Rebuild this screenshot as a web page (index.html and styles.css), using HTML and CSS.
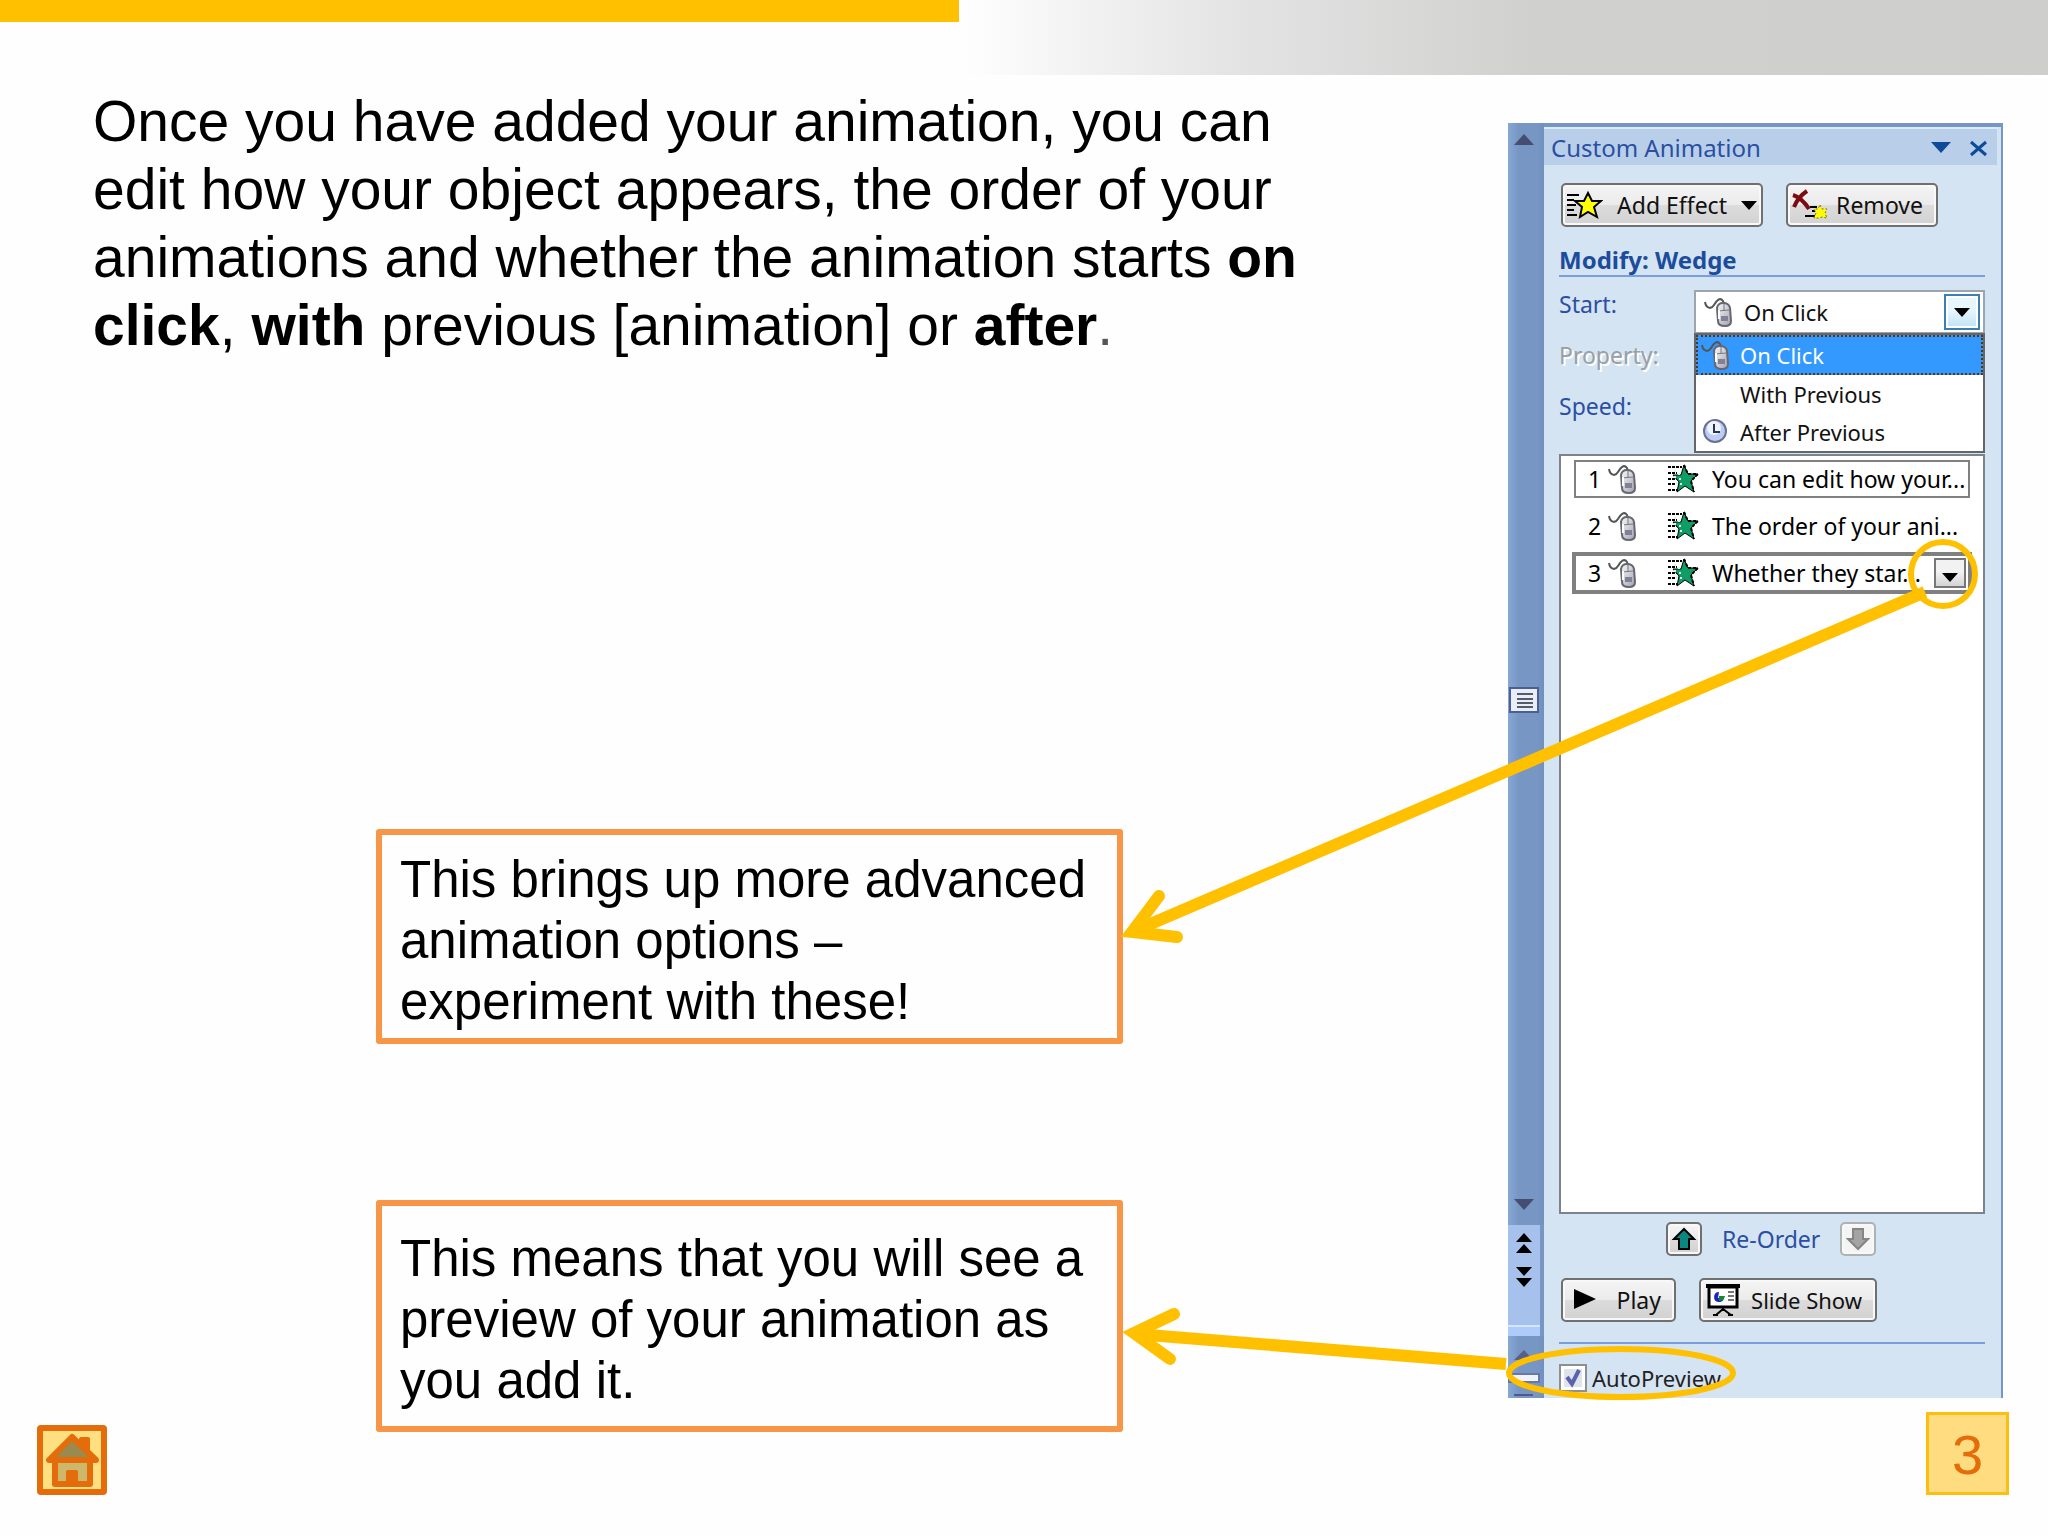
FILE: index.html
```
<!DOCTYPE html>
<html lang="en">
<head>
    <meta charset="UTF-8">
    <meta name="viewport" content="width=device-width, initial-scale=1.0">
    <title>Custom Animation</title>
    <link rel="stylesheet" href="styles.css">
</head>
<body>
    <!-- shared icons -->
    <svg class="defs" aria-hidden="true">
        <defs>
            <linearGradient id="mouseFill" x1="0" y1="0" x2="1" y2="1">
                <stop offset="0" stop-color="#fafafc"/>
                <stop offset="1" stop-color="#a0a1b0"/>
            </linearGradient>
            <symbol id="mouse" viewBox="0 0 30 32">
                <path d="M1 6c1 6 6 8 9 3s6-8 9-4l1 3" fill="none" stroke="#555" stroke-width="2"/>
                <path d="M13 12q1-5 6-5 6 0 7 5l1 13q0 5-6 5-7 0-7-5z" fill="url(#mouseFill)" stroke="#66676f" stroke-width="2"/>
                <path d="M14 15l11-1M20 8v6" stroke="#77787f" stroke-width="1" fill="none"/>
                <path d="M17 20h7v5h-7z" fill="#808196"/>
                <path d="M15 14v9" stroke="#fff" stroke-width="2"/>
            </symbol>
            <symbol id="effect" viewBox="0 0 32 30">
                <path d="M1 3h14M1 9h9M1 15h10M1 20h8M1 26h12" stroke="#000" stroke-width="2" stroke-dasharray="3 1"/>
                <path d="M17 1l4 9h10l-7 7 3 11-9-6-8 6 2-10-6-7h8z" fill="#0f9d66" stroke="#000" stroke-width="1"/>
                <path d="M7 6h2v2h-2zM11 9h2v2h-2zM7 12h2v2h-2zM12 14h2v2h-2zM9 18h2v2h-2zM13 19h2v2h-2z" fill="#d8f5e8"/>
                <path d="M17 1l4 9h10l-7 7 3 11" fill="none" stroke="#000" stroke-width="2" stroke-dasharray="3 2"/>
            </symbol>
        </defs>
    </svg>

    <header class="band">
        <div class="band-yellow"></div>
    </header>

    <main>
        <section class="left">
            <p class="intro">Once you have added your animation, you can edit how your object appears, the order of your animations and whether the animation starts <b>on</b> <b>click</b>, <b>with</b> previous [animation] or <b>after</b><span class="dot">.</span></p>
            <div class="note note-options">This brings up more advanced animation options – experiment with these!</div>
            <div class="note note-preview">This means that you will see a preview of your animation as you add it.</div>
        </section>

        <section class="shot">
            <div class="scroll">
                <svg class="scroll-up" width="20" height="11" viewBox="0 0 20 11"><path d="M0 11L10 0l10 11z" fill="#454d70"/></svg>
                <svg class="thumb" width="30" height="26" viewBox="0 0 30 26">
                    <rect x="1" y="1" width="28" height="24" fill="#e9edf6" stroke="#4a5f96" stroke-width="2"/>
                    <path d="M8 7h16M8 12h16M8 16h16M8 20h16" stroke="#555b6b" stroke-width="2"/>
                </svg>
                <svg class="scroll-down" width="20" height="11" viewBox="0 0 20 11"><path d="M0 0h20L10 11z" fill="#454d70"/></svg>
                <div class="pager">
                    <svg width="16" height="54" viewBox="0 0 16 54">
                        <path d="M8 0l8 9H0zM8 11l8 9H0zM0 34h16l-8 9zM0 45h16l-8 9z" fill="#000"/>
                    </svg>
                </div>
                <div class="lower">
                    <svg width="32" height="52" viewBox="0 0 32 52">
                        <path d="M6 16L16 6l9 10z" fill="#56608a"/>
                        <rect x="1" y="30" width="30" height="8" fill="#f2f3f8" stroke="#6678a8" stroke-width="2"/>
                        <path d="M6 51h19" stroke="#4d5b8c" stroke-width="2"/>
                    </svg>
                </div>
            </div>

            <div class="pane">
                <div class="titlebar">
                    <span>Custom Animation</span>
                    <svg width="58" height="18" viewBox="0 0 58 18">
                        <path d="M0 3h20L10 14z" fill="#0f4a98"/>
                        <path d="M40 3l15 13M55 3L40 16" stroke="#0f4a98" stroke-width="3"/>
                    </svg>
                </div>

                <div class="pane-body">
                    <div class="buttons">
                        <button type="button" class="btn add">
                            <svg width="36" height="30" viewBox="0 0 36 30">
                                <path d="M0 5h12M0 10h7M0 15h9M0 20h7M0 25h10" stroke="#000" stroke-width="2"/>
                                <path d="M21 3l4 8h9l-7 6 3 10-9-5-8 5 2-10-7-6h9z" fill="#ff0" stroke="#000" stroke-width="2"/>
                            </svg>
                            <span>Add Effect</span>
                            <svg width="16" height="9" viewBox="0 0 16 9"><path d="M0 0h16L8 9z"/></svg>
                        </button>
                        <button type="button" class="btn remove">
                            <svg width="36" height="32" viewBox="0 0 36 32">
                                <path d="M1 6q9 3 16 14M15 2Q6 8 2 18" fill="none" stroke="#7c0b12" stroke-width="4"/>
                                <path d="M18 18h7M20 22h5M13 27h12" stroke="#000" stroke-width="2"/>
                                <path d="M28 16l2 4h5l-2 4 2 5-5-1-3 1-5 0 2-5-2-4h4z" fill="#ff0" stroke="#777000" stroke-width="1" stroke-dasharray="2 2"/>
                            </svg>
                            <span>Remove</span>
                        </button>
                    </div>

                    <h2>Modify: Wedge</h2>

                    <div class="fields">
                        <div class="labels">
                            <label for="start">Start:</label>
                            <span class="off">Property:</span>
                            <span>Speed:</span>
                        </div>
                        <div class="combo">
                            <div class="combo-box">
                                <svg width="30" height="32"><use href="#mouse"/></svg>
                                <select id="start">
                                    <option>On Click</option>
                                    <option>With Previous</option>
                                    <option>After Previous</option>
                                </select>
                                <span class="combo-arrow"><svg width="16" height="9" viewBox="0 0 16 9"><path d="M0 0h16L8 9z"/></svg></span>
                            </div>
                            <ul class="menu" role="listbox" aria-label="Start">
                                <li class="picked" role="option" aria-selected="true"><svg width="30" height="32"><use href="#mouse"/></svg>On Click</li>
                                <li role="option"><svg width="30" height="32"></svg>With Previous</li>
                                <li role="option">
                                    <svg width="30" height="32" viewBox="0 0 30 32">
                                        <circle cx="14" cy="15" r="11" fill="#bccdf5" stroke="#6a7190" stroke-width="2"/>
                                        <circle cx="13" cy="12" r="7" fill="#eef3fe"/>
                                        <path d="M13 8v8h6" fill="none" stroke="#2a3350" stroke-width="2"/>
                                    </svg>After Previous</li>
                            </ul>
                        </div>
                    </div>

                    <ol class="effects">
                        <li class="boxed">
                            <span class="num">1</span>
                            <svg class="m" width="30" height="32"><use href="#mouse"/></svg>
                            <svg class="s" width="32" height="30"><use href="#effect"/></svg>
                            <span>You can edit how your...</span>
                        </li>
                        <li>
                            <span class="num">2</span>
                            <svg class="m" width="30" height="32"><use href="#mouse"/></svg>
                            <svg class="s" width="32" height="30"><use href="#effect"/></svg>
                            <span>The order of your ani...</span>
                        </li>
                        <li class="current">
                            <span class="num">3</span>
                            <svg class="m" width="30" height="32"><use href="#mouse"/></svg>
                            <svg class="s" width="32" height="30"><use href="#effect"/></svg>
                            <span>Whether they star...</span>
                            <button type="button" class="more" aria-label="Effect options"><svg width="16" height="9" viewBox="0 0 16 9"><path d="M0 0h16L8 9z"/></svg></button>
                        </li>
                    </ol>

                    <div class="reorder">
                        <button type="button" class="btn square" aria-label="Move up">
                            <svg width="24" height="24" viewBox="0 0 24 24"><path d="M12 2l10 10h-5v10H7V12H2z" fill="#0b8680" stroke="#000" stroke-width="2"/></svg>
                        </button>
                        <span>Re-Order</span>
                        <button type="button" class="btn square dim" aria-label="Move down" disabled>
                            <svg width="24" height="24" viewBox="0 0 24 24"><path d="M12 22L2 12h5V2h10v10h5z" fill="#a3a3a3" stroke="#858585" stroke-width="2"/></svg>
                        </button>
                    </div>

                    <div class="buttons show">
                        <button type="button" class="btn play">
                            <svg width="26" height="24" viewBox="0 0 26 24"><path d="M1 1l22 10L1 21z"/></svg>
                            <span>Play</span>
                        </button>
                        <button type="button" class="btn slides">
                            <svg width="34" height="32" viewBox="0 0 34 32">
                                <path d="M0 2h34" stroke="#000" stroke-width="4"/>
                                <rect x="3" y="3" width="28" height="20" fill="#fff" stroke="#000" stroke-width="3"/>
                                <path d="M17 22v4M10 31l7-6 8 6M7 31h5M22 31h5" fill="none" stroke="#000" stroke-width="2"/>
                                <path d="M13 8a5 5 0 1 0 5 6h-6z" fill="#1a22c8"/>
                                <path d="M13 12h6q-1 5-6 5z" fill="#128a2a"/>
                                <path d="M22 8h6M22 12h6M22 16h6" stroke="#777" stroke-width="2"/>
                            </svg>
                            <span>Slide Show</span>
                        </button>
                    </div>

                    <div class="auto">
                        <label for="auto">
                            <span class="tick">
                                <input type="checkbox" id="auto" checked>
                                <svg width="28" height="28" viewBox="0 0 28 28"><path d="M8 13l5 7 7-14" fill="none" stroke="#5a62ae" stroke-width="4"/></svg>
                            </span>
                            AutoPreview
                        </label>
                    </div>
                </div>
            </div>
        </section>
    </main>

    <footer>
        <a href="#" class="home" aria-label="Home">
            <svg width="58" height="58" viewBox="0 0 58 58">
                <path d="M12 29h35v24H12z" fill="#cdb768" stroke="#e46c0a" stroke-width="6" stroke-linejoin="round"/>
                <path d="M38 8h7v18h-7z" fill="#e46c0a" stroke="#e46c0a" stroke-width="4" stroke-linejoin="round"/>
                <path d="M29 6L6 29h47z" fill="#998b50" stroke="#e46c0a" stroke-width="6" stroke-linejoin="round"/>
                <rect x="23" y="39" width="12" height="15" rx="2" fill="#e46c0a"/>
            </svg>
        </a>
        <div class="page">3</div>
    </footer>

    <!-- arrows and rings drawn over the slide -->
    <svg class="marks" viewBox="0 0 2048 1536" aria-hidden="true">
        <g fill="none" stroke="#ffc000">
            <circle cx="1943" cy="574" r="32" stroke-width="6"/>
            <ellipse cx="1621" cy="1373" rx="112" ry="24" stroke-width="6"/>
            <path d="M1925 592L1134 931" stroke-width="12"/>
            <path d="M1159 896L1132 932L1177 937" stroke-width="12" stroke-linecap="round"/>
            <path d="M1506 1364L1136 1334" stroke-width="12"/>
            <path d="M1174 1314L1134 1333L1170 1359" stroke-width="12" stroke-linecap="round"/>
        </g>
    </svg>
</body>
</html>
```

FILE: styles.css
```
* {
    box-sizing: border-box;
}

body {
    margin: 0;
    position: relative;
    min-height: 100vh;
    background-color: #fefefe;
    font-family: "Liberation Sans", Arial, sans-serif;
    color: #000;
}

svg {
    flex-shrink: 0;
    display: block;
}

.defs {
    position: absolute;
    width: 0;
    height: 0;
}

.marks {
    position: absolute;
    top: 0;
    left: 0;
    width: 100%;
    pointer-events: none;
}

/* top band */
.band {
    height: 75px;
    background: linear-gradient(to right, #fefefe 47%, #e4e4e4 60%, #d0d0cf 75%, #cececd 100%);
}

.band-yellow {
    width: 959px;
    height: 22px;
    background-color: #ffc000;
}

main {
    display: flex;
    justify-content: space-between;
    align-items: flex-start;
    padding: 0 45px 0 93px;
}

.left {
    width: 1220px;
    padding-top: 12px;
}

.intro {
    margin: 0;
    font-size: 57px;
    line-height: 68px;
}

.dot {
    color: #555;
}

.note {
    width: 747px;
    margin-left: 283px;
    border: 6px solid #f79646;
    border-radius: 3px;
    font-size: 51px;
    line-height: 61px;
}

.note-options {
    margin-top: 470px;
    padding: 14px 18px 6px;
}

.note-preview {
    margin-top: 156px;
    padding: 22px 18px 15px;
}

/* task pane */
.shot {
    display: flex;
    width: 495px;
    margin-top: 48px;
    background-color: #d5e4f2;
    font-family: "Noto Sans", sans-serif;
    font-size: 24px;
    line-height: 30px;
}

.scroll {
    display: flex;
    flex-direction: column;
    align-items: center;
    width: 36px;
    background: linear-gradient(to right, #86a8d4, #7896c4 30%, #7896c4 80%, #6f91c0);
}

.scroll > svg {
    margin-right: 4px;
}

.scroll-up {
    margin-top: 11px;
}

.thumb {
    margin-top: 542px;
}

.scroll-down {
    margin-top: auto;
    margin-bottom: 15px;
}

.pager {
    width: 100%;
    height: 111px;
    padding: 8px;
    border-right: 4px solid #7896c4;
    background: linear-gradient(#a6c1ec 90%, #d5e5ff 90%, #d5e5ff 92%, #aecbfa 92%);
}

.lower {
    width: 100%;
    height: 62px;
    padding-top: 8px;
}

.pane {
    flex: 1;
    border-top: 4px solid #7896c4;
    border-right: 2px solid #7896c4;
}

.titlebar {
    display: flex;
    justify-content: space-between;
    align-items: center;
    height: 38px;
    margin-right: 4px;
    padding: 2px 8px 0 7px;
    border-top: 2px solid #dcebfa;
    background-color: #b9cfe9;
    color: #2a4fa3;
}

.pane-body {
    padding: 18px 16px 5px 15px;
}

.buttons {
    display: flex;
    gap: 23px;
    padding-left: 2px;
}

.btn {
    display: flex;
    align-items: center;
    height: 44px;
    padding: 0 6px;
    border: 2px solid #707070;
    border-radius: 5px;
    background: linear-gradient(#f4f4f4, #ebebeb 50%, #dcdcdc 50%, #d2d2d2);
    box-shadow: inset 0 0 0 2px #f8f8f8;
    font-family: inherit;
    font-size: 23px;
    color: #111;
}

.add {
    justify-content: space-between;
    width: 202px;
    padding: 0 4px;
}

.remove {
    justify-content: space-between;
    width: 152px;
    padding: 0 13px 0 4px;
}

h2 {
    margin: 18px 0 12px;
    border-bottom: 2px solid #7b9fdb;
    font-size: 24px;
    line-height: 30px;
    color: #1c4c9c;
}

.fields {
    display: flex;
    justify-content: space-between;
    height: 165px;
    color: #2a4fa3;
}

.labels {
    display: flex;
    flex-direction: column;
    gap: 21px;
    font-size: 23px;
}

.off {
    color: #9a9fa6;
    text-shadow: 2px 2px 0 #fff;
}

.combo {
    position: relative;
    width: 291px;
    padding-top: 1px;
    color: #111;
}

.combo-box {
    display: flex;
    align-items: center;
    height: 44px;
    padding: 0 3px 0 8px;
    border: 2px solid #9ea4ae;
    background-color: #fff;
}

.combo-box select {
    flex: 1;
    appearance: none;
    padding: 0 0 0 10px;
    border: 0;
    background: none;
    font-family: inherit;
    font-size: 22px;
    color: #111;
}

.combo-arrow {
    display: flex;
    justify-content: center;
    align-items: center;
    width: 36px;
    height: 36px;
    border: 2px solid #3c7fb1;
    background: linear-gradient(#e8f6fd 45%, #c0e2f5);
    box-shadow: inset 0 0 0 2px #fff;
}

.menu {
    position: absolute;
    top: 44px;
    left: 0;
    width: 100%;
    margin: 0;
    padding: 0;
    border: 2px solid #666;
    background-color: #fff;
    list-style: none;
    font-size: 22px;
}

.menu li {
    display: flex;
    align-items: center;
    gap: 9px;
    height: 38px;
    padding-left: 5px;
}

.menu .picked {
    height: 40px;
    padding-left: 3px;
    border: 2px dotted #5a3510;
    background-color: #3399ff;
    color: #fff;
}

.effects {
    height: 760px;
    margin: 0;
    padding: 4px 11px;
    border: 2px solid #7c838d;
    background-color: #fff;
    list-style: none;
    font-size: 23px;
}

.effects li {
    display: flex;
    align-items: center;
    height: 38px;
    margin: 0 2px 9px;
    padding-left: 12px;
    border: 2px solid transparent;
    white-space: nowrap;
}

.effects .boxed {
    border-color: #808080;
}

.effects .current {
    height: 42px;
    margin: -2px 0 0;
    padding: 0 2px 0 12px;
    border: 4px solid #808080;
}

.num {
    width: 20px;
}

.s {
    margin: 0 13px 0 29px;
}

.more {
    display: flex;
    justify-content: center;
    align-items: flex-end;
    width: 32px;
    height: 30px;
    margin-left: auto;
    padding: 0 0 4px;
    border: 2px solid #777;
    background: linear-gradient(#f2f2f2 45%, #d4d4d4);
}

.reorder {
    display: flex;
    align-items: center;
    gap: 20px;
    margin: 8px 0 22px;
    padding-left: 107px;
    font-size: 23px;
    color: #2a4fa3;
}

.square {
    justify-content: center;
    width: 36px;
    height: 34px;
    padding: 0;
}

.dim {
    border-color: #adb2b5;
    background: #f4f4f4;
}

.play {
    justify-content: space-between;
    width: 115px;
    padding: 0 13px 0 10px;
}

.slides {
    justify-content: space-between;
    width: 178px;
    padding: 0 13px 0 5px;
    font-size: 22px;
}

.auto {
    margin-top: 20px;
    padding-top: 19px;
    border-top: 2px solid #7b9fdb;
    font-size: 22px;
    color: #222;
}

.auto label {
    display: flex;
    align-items: center;
    gap: 5px;
}

.tick {
    position: relative;
    height: 28px;
}

.tick input {
    display: block;
    appearance: none;
    width: 28px;
    height: 28px;
    margin: 0;
    border: 2px solid #8e8f8f;
    background-color: #dfe3ea;
    box-shadow: inset 0 0 0 3px #fff;
}

.tick svg {
    position: absolute;
    top: 0;
    left: 0;
}

/* bottom row */
footer {
    display: flex;
    justify-content: space-between;
    align-items: flex-end;
    margin-top: -20px;
    padding: 0 39px 0 37px;
}

.home {
    display: block;
    width: 70px;
    height: 70px;
    border: 6px solid #e46c0a;
    border-radius: 4px;
    background-color: #ffdf80;
}

.page {
    width: 83px;
    height: 83px;
    border: 3px solid #fcbf10;
    background-color: #ffdc80;
    font-size: 56px;
    line-height: 80px;
    text-align: center;
    color: #e46c0a;
}
```
